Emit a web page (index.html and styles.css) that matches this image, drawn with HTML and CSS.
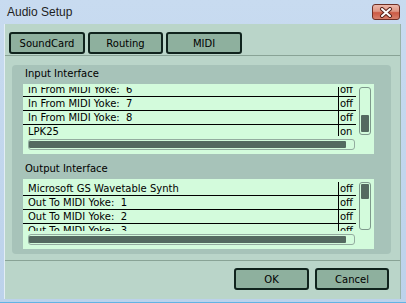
FILE: index.html
```html
<!DOCTYPE html>
<html lang="en">
<head>
    <meta charset="UTF-8">
    <title>Audio Setup</title>
    <link rel="stylesheet" href="styles.css">
</head>
<body>
    <div class="window">
        <div class="titlebar">
            <span class="title">Audio Setup</span>
            <button class="close" aria-label="Close">
                <svg width="14" height="11" viewBox="0 0 14 11">
                    <path d="M3 2 L11 9 M11 2 L3 9" stroke="#5a231b" stroke-width="4" stroke-linecap="round"/>
                    <path d="M3 2 L11 9 M11 2 L3 9" stroke="#ffffff" stroke-width="2" stroke-linecap="round"/>
                </svg>
            </button>
        </div>
        <div class="client">
            <div class="tabs">
                <button class="btn tab">SoundCard</button>
                <button class="btn tab">Routing</button>
                <button class="btn tab">MIDI</button>
            </div>
            <div class="divider"></div>

            <div class="panel">
                <div class="group-label">Input Interface</div>
                <div class="listbox">
                    <div class="list-main">
                        <div class="viewport">
                            <div class="rows scrolled">
                                <div class="row"><span class="name">In From MIDI Yoke:  6</span><span class="state">off</span></div>
                                <div class="row"><span class="name">In From MIDI Yoke:  7</span><span class="state">off</span></div>
                                <div class="row"><span class="name">In From MIDI Yoke:  8</span><span class="state">off</span></div>
                                <div class="row"><span class="name">LPK25</span><span class="state">on</span></div>
                            </div>
                        </div>
                        <div class="hscroll"><div class="hthumb"></div></div>
                    </div>
                    <div class="vscroll"><div class="vthumb" style="margin-top: 27px; height: 17px;"></div></div>
                </div>

                <div class="group-label">Output Interface</div>
                <div class="listbox">
                    <div class="list-main">
                        <div class="viewport">
                            <div class="rows">
                                <div class="row"><span class="name">Microsoft GS Wavetable Synth</span><span class="state">off</span></div>
                                <div class="row"><span class="name">Out To MIDI Yoke:  1</span><span class="state">off</span></div>
                                <div class="row"><span class="name">Out To MIDI Yoke:  2</span><span class="state">off</span></div>
                                <div class="row"><span class="name">Out To MIDI Yoke:  3</span><span class="state">off</span></div>
                            </div>
                        </div>
                        <div class="hscroll"><div class="hthumb"></div></div>
                    </div>
                    <div class="vscroll"><div class="vthumb" style="margin-top: 1px; height: 15px;"></div></div>
                </div>
            </div>

            <div class="divider bottom"></div>
            <div class="actions">
                <button class="btn action">OK</button>
                <button class="btn action">Cancel</button>
            </div>
        </div>
    </div>
</body>
</html>
```

FILE: styles.css
```css
body {
    margin: 0;
    padding: 0;
    background-color: #bdd3ec;
}
.window {
    width: 406px;
    height: 303px;
    box-sizing: border-box;
    background: linear-gradient(#c8dbf0, #bcd2eb);
    border-bottom: 1px solid #62b3e4;
    overflow: hidden;
}
.titlebar {
    height: 24px;
    display: flex;
    align-items: center;
    padding: 0 6px 0 7px;
}
.title {
    font-family: "Liberation Sans", Arial, sans-serif;
    font-size: 12px;
    line-height: 14px;
    color: #1e1e1e;
}
.close {
    margin-left: auto;
    width: 28px;
    height: 16px;
    padding: 0;
    border: 1px solid #6e2e24;
    border-radius: 3px;
    background: linear-gradient(#ecb8aa 0%, #df9684 45%, #cc5a44 55%, #d8806c 100%);
    display: flex;
    align-items: center;
    justify-content: center;
}
.close svg {
    display: block;
}
.client {
    margin: 0 5px 0 4px;
    height: 275px;
    box-sizing: border-box;
    background-color: #bad5c9;
    border-left: 1px solid #e2edf5;
    border-right: 1px solid #9ab4a8;
    font-family: "DejaVu Sans", sans-serif;
    font-size: 10px;
    color: #000;
}
.tabs {
    display: flex;
    gap: 3px;
    padding: 8px 0 0 4px;
}
.btn {
    height: 22px;
    box-sizing: border-box;
    padding: 0;
    border: 2px solid #10231d;
    border-radius: 3px;
    background-color: #8eb09e;
    font-family: "DejaVu Sans", sans-serif;
    font-size: 10px;
    color: #000;
}
.tab {
    width: 76px;
}
.tab + .tab {
    width: 75px;
}
.tab:last-child {
    width: 76px;
}
.divider {
    margin-top: 1px;
    height: 1px;
    background-color: #89a396;
}
.divider.bottom {
    margin-top: 6px;
}
.panel {
    margin: 9px 0 0 7px;
    width: 379px;
    height: 189px;
    box-sizing: border-box;
    padding: 3px 0 0 11px;
    background-color: #a7c3b9;
    border-radius: 4px;
}
.group-label {
    height: 12px;
    line-height: 12px;
    padding-left: 2px;
    margin-bottom: 4px;
}
.listbox + .group-label {
    margin-top: 9px;
}
.listbox {
    width: 351px;
    height: 70px;
    background-color: #d3fbdc;
    display: flex;
}
.list-main {
    width: 333px;
}
/* the visible part of the list starts 3px below the box edge */
.viewport {
    margin-top: 3px;
    height: 49px;
    overflow: hidden;
}
.rows.scrolled {
    margin-top: -4px;
}
.row {
    display: flex;
    height: 14px;
    box-sizing: border-box;
    border-bottom: 1px solid #000;
    line-height: 13px;
}
.name {
    width: 315px;
    padding-left: 5px;
    box-sizing: border-box;
    white-space: pre;
}
.state {
    border-left: 1px solid #000;
    padding-left: 1px;
    flex: 1;
}
.hscroll {
    margin: 3px 0 0 5px;
    width: 327px;
    height: 11px;
    box-sizing: border-box;
    border: 1px solid #93ab9f;
    border-radius: 3px;
    padding: 1px 8px 1px 0;
}
.hthumb {
    height: 7px;
    background-color: #546a60;
    border-radius: 1px;
}
.vscroll {
    margin: 3px 0 0 3px;
    width: 12px;
    height: 48px;
    box-sizing: border-box;
    border: 1px solid #7e988c;
    border-radius: 3px;
    padding: 0 1px;
}
.vthumb {
    background-color: #546a60;
    border-radius: 1px;
}
.actions {
    display: flex;
    justify-content: flex-end;
    gap: 6px;
    margin-top: 7px;
    padding-right: 11px;
}
.action {
    width: 75px;
}
.action + .action {
    width: 74px;
}
```
